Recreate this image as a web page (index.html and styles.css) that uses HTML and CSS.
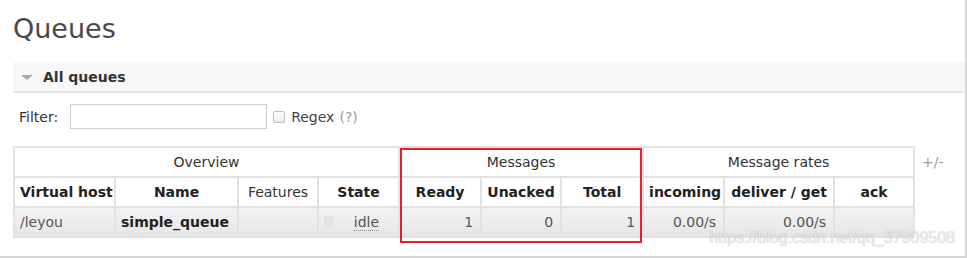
FILE: index.html
```html
<!DOCTYPE html>
<html lang="en">
<head>
    <meta charset="UTF-8">
    <title>Queues</title>
    <link rel="stylesheet" href="styles.css">
</head>
<body>
<div class="page">
    <h1>Queues</h1>

    <div class="section">
        <h2 class="section-head"><span class="arrow"></span>All queues</h2>

        <div class="filter">
            <label for="filter">Filter:</label>
            <input type="text" id="filter" class="filter-text">
            <input type="checkbox" id="regex" class="regex-box">
            <label for="regex" class="regex-label">Regex</label>
            <span class="help">(?)</span>
        </div>

        <table class="list">
            <colgroup>
                <col class="w-vhost">
                <col class="w-name">
                <col class="w-features">
                <col class="w-state">
                <col class="w-ready">
                <col class="w-unacked">
                <col class="w-total">
                <col class="w-incoming">
                <col class="w-deliver">
                <col class="w-ack">
                <col class="w-toggle">
            </colgroup>
            <thead>
                <tr>
                    <th colspan="4" class="group">Overview</th>
                    <th colspan="3" class="group">Messages</th>
                    <th colspan="3" class="group">Message rates</th>
                    <th class="toggle">+/-</th>
                </tr>
                <tr>
                    <th>Virtual host</th>
                    <th>Name</th>
                    <th class="plain">Features</th>
                    <th>State</th>
                    <th>Ready</th>
                    <th>Unacked</th>
                    <th>Total</th>
                    <th>incoming</th>
                    <th>deliver / get</th>
                    <th>ack</th>
                </tr>
            </thead>
            <tbody>
                <tr>
                    <td>/leyou</td>
                    <td class="qname">simple_queue</td>
                    <td></td>
                    <td><div class="state"><span class="status-grey"></span><abbr>idle</abbr></div></td>
                    <td class="r">1</td>
                    <td class="r">0</td>
                    <td class="r">1</td>
                    <td class="r">0.00/s</td>
                    <td class="r">0.00/s</td>
                    <td></td>
                </tr>
            </tbody>
        </table>
    </div>

    <!-- annotation drawn on top of the screenshot -->
    <div class="highlight"></div>
    <div class="watermark">https://blog.csdn.net/qq_37909508</div>
</div>
</body>
</html>
```

FILE: styles.css
```css
body {
    margin: 0;
    font-family: "DejaVu Sans", Verdana, sans-serif;
    font-size: 14px;
    color: #333;
    background-color: #fff;
}

.page {
    position: relative;
    width: 952px;
    height: 256px;
    padding-left: 13px;
    border-right: 2px solid #d6d6d6;
    border-bottom: 2px solid #d6d6d6;
    overflow: hidden;
}

h1 {
    margin: 13px 0 0 0;
    font-size: 27px;
    line-height: 32px;
    font-weight: normal;
    color: #484848;
}

.section {
    margin-top: 17px;
}

.section-head {
    display: flex;
    align-items: center;
    height: 29px;
    margin: 0;
    background-color: #f8f8f8;
    border-bottom: 2px solid #e6e6e6;
    font-size: 14px;
    font-weight: bold;
    color: #333;
}

.arrow {
    width: 0;
    height: 0;
    margin: 1px 10px 0 8px;
    border-left: 6px solid transparent;
    border-right: 6px solid transparent;
    border-top: 5px solid #aaa;
}

.filter {
    display: flex;
    align-items: center;
    margin-top: 11px;
    padding-left: 6px;
    color: #333;
}

.filter-text {
    box-sizing: border-box;
    width: 197px;
    height: 25px;
    margin: 0 6px 0 12px;
    border: 1px solid #cfcfcf;
    padding: 0 4px;
}

.regex-box {
    appearance: none;
    width: 12px;
    height: 12px;
    margin: 0 6px 0 0;
    border: 1px solid #bdbdbd;
    border-radius: 2px;
    background: linear-gradient(#fff, #ececec);
}

.regex-label {
    color: #444;
}

.help {
    margin-left: 5px;
    color: #999;
}

table.list {
    table-layout: fixed;
    width: 940px;
    margin: 17px 0 0 0;
    border-collapse: collapse;
}

.w-vhost { width: 101px; }
.w-name { width: 123px; }
.w-features { width: 80px; }
.w-state { width: 81px; }
.w-ready { width: 82px; }
.w-unacked { width: 80px; }
.w-total { width: 82px; }
.w-incoming { width: 81px; }
.w-deliver { width: 110px; }
.w-ack { width: 80px; }
.w-toggle { width: 40px; }

table.list th,
table.list td {
    height: 28px;
    padding: 0 5px;
    border: 2px solid #e2e2e2;
    white-space: nowrap;
    overflow: hidden;
}

table.list th {
    background-color: #fff;
    font-weight: bold;
    color: #222;
    text-align: center;
}

table.list th.group,
table.list th.plain {
    font-weight: normal;
    color: #333;
}

table.list th.toggle {
    border: none;
    padding-left: 7px;
    text-align: left;
    font-weight: normal;
    color: #999;
}

table.list td {
    background: linear-gradient(#f3f3f3, #e6e6e6);
    color: #555;
    text-align: left;
}

table.list td.r {
    text-align: right;
    padding-right: 7px;
}

table.list td.qname {
    font-weight: bold;
    color: #222;
}

.state {
    display: flex;
    align-items: center;
}

.status-grey {
    width: 11px;
    height: 11px;
    margin-top: -2px;
    background-color: #e4e4e4;
}

.state abbr {
    flex: 1;
    text-align: center;
    text-decoration: none;
    border-bottom: 1px dotted #888;
    margin: 0 14px 0 20px;
}

.highlight {
    position: absolute;
    left: 400px;
    top: 148px;
    width: 238px;
    height: 91px;
    border: 2px solid #e5222b;
}

.watermark {
    position: absolute;
    right: 10px;
    top: 229px;
    font-family: "Liberation Sans", Arial, sans-serif;
    font-size: 16px;
    color: rgba(255, 255, 255, 0.75);
    text-shadow: 0 0 1px rgba(0, 0, 0, 0.35);
}
```
